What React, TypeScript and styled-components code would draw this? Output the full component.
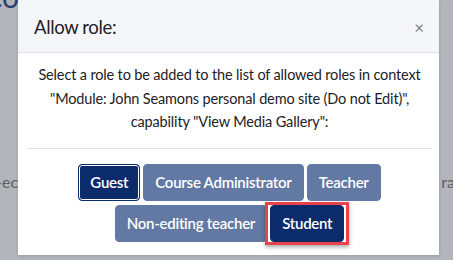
import React from "react";
import styled, { createGlobalStyle } from "styled-components";

const colors = {
  backdrop: "#b2b5b9",
  navy: "#0c2b6b",
  slate: "#6279a4",
  text: "#1d2125",
  headerBg: "#f5f6f9",
  line: "#dee2e6",
  highlight: "#e8434b",
};

const GlobalStyle = createGlobalStyle`
  html, body {
    margin: 0;
    padding: 0;
    background: ${colors.backdrop};
  }
  body {
    font-family: Lato, "Liberation Sans", sans-serif;
  }
`;

const Page = styled.div`
  position: relative;
  width: 453px;
  height: 260px;
  overflow: hidden;
  background: ${colors.backdrop};
`;

const BehindText = styled.span<{ side: "left" | "right"; top: number }>`
  position: absolute;
  top: ${({ top }) => top}px;
  ${({ side }) => (side === "left" ? "left: -4px;" : "right: -2px;")}
  font-size: 16px;
  color: #5d6066;
`;

const BehindHeading = styled.span`
  position: absolute;
  top: -22px;
  left: -12px;
  font-size: 30px;
  color: #2b3f6c;
`;

const Overlay = styled.div`
  position: absolute;
  inset: 0;
  display: flex;
  justify-content: flex-start;
  padding-left: 18px;
`;

const Modal = styled.div`
  width: 421px;
  height: 255px;
  overflow: hidden;
  background: #fff;
  display: flex;
  flex-direction: column;
  box-shadow: 0 1px 3px rgba(0, 0, 0, 0.15);
`;

const Header = styled.div`
  flex-shrink: 0;
  height: 53px;
  box-sizing: border-box;
  background: ${colors.headerBg};
  border-bottom: 1px solid ${colors.line};
  display: flex;
  align-items: center;
  justify-content: space-between;
  padding: 2px 15px 0 16px;
`;

const Title = styled.h5`
  margin: 0;
  font-size: 18.5px;
  font-weight: 400;
  letter-spacing: -0.35px;
  color: ${colors.text};
`;

const Close = styled.span`
  font-size: 17px;
  color: #7d8185;
  line-height: 1;
`;

const Body = styled.div`
  padding: 10px 7px 0 9px;
  display: flex;
  flex-direction: column;
`;

const Message = styled.p`
  margin: 0;
  text-align: center;
  font-size: 14.5px;
  letter-spacing: -0.15px;
  line-height: 23.5px;
  white-space: nowrap;
  color: ${colors.text};
`;

const Divider = styled.hr`
  margin: 14px 0 15px;
  border: 0;
  border-top: 1px solid ${colors.line};
`;

const Roles = styled.div`
  display: flex;
  flex-wrap: wrap;
  justify-content: center;
  gap: 4px 3px;
  padding: 0 46px;
`;

const RoleButton = styled.button<{ primary?: boolean; focused?: boolean }>`
  position: relative;
  height: 37px;
  padding: 0 11px;
  border: 1px solid ${({ primary }) => (primary ? colors.navy : colors.slate)};
  border-radius: 4px;
  background: ${({ primary }) => (primary ? colors.navy : colors.slate)};
  color: #fff;
  font-family: Lato, "Liberation Sans", sans-serif;
  font-size: 15px;
  font-weight: 600;
  letter-spacing: -0.25px;
  white-space: nowrap;
  box-shadow: ${({ focused }) => (focused ? "inset 0 0 0 1px #fff" : "none")};
`;

const Highlight = styled.span`
  position: absolute;
  left: -6px;
  right: -6px;
  top: -4px;
  bottom: -4px;
  border: 3px solid ${colors.highlight};
  box-shadow: 0 2px 4px rgba(0, 0, 0, 0.35);
  pointer-events: none;
`;

const roles = [
  { name: "Guest", primary: true, focused: true },
  { name: "Course Administrator" },
  { name: "Teacher" },
  { name: "Non-editing teacher" },
  { name: "Student", primary: true, marked: true },
];

export default function App() {
  return (
    <Page>
      <GlobalStyle />
      <BehindHeading>co</BehindHeading>
      <BehindText side="left" top={172}>
        -ec
      </BehindText>
      <BehindText side="right" top={172}>
        ra
      </BehindText>
      <Overlay>
        <Modal>
          <Header>
            <Title>Allow role:</Title>
            <Close>×</Close>
          </Header>
          <Body>
            <Message>
              Select a role to be added to the list of allowed roles in context
              <br />
              "Module: John Seamons personal demo site (Do not Edit)",
              <br />
              capability "View Media Gallery":
            </Message>
            <Divider />
            <Roles>
              {roles.map((r) => (
                <RoleButton key={r.name} primary={r.primary} focused={r.focused}>
                  {r.name}
                  {r.marked && <Highlight />}
                </RoleButton>
              ))}
            </Roles>
          </Body>
        </Modal>
      </Overlay>
    </Page>
  );
}
